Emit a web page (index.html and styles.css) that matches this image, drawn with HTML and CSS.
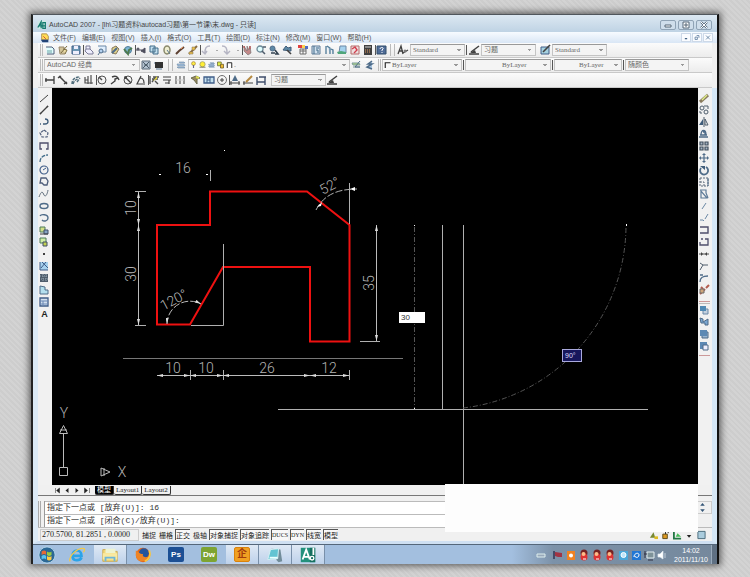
FILE: index.html
```html
<!DOCTYPE html>
<html lang="zh-CN">
<head>
    <meta charset="UTF-8">
    <meta name="viewport" content="width=device-width, initial-scale=1.0">
    <title>AutoCAD 2007</title>
    <link rel="stylesheet" href="styles.css">
</head>
<body>
    <!-- Icon sprite -->
    <svg class="sprite" aria-hidden="true">
        <symbol id="new" viewBox="0 0 12 12"><path d="M2 3h6l2 2v5H3" fill="#dff" stroke="#346" /><path d="M3 6h5v3H3z" fill="#9cc" /></symbol>
        <symbol id="open" viewBox="0 0 12 12"><path d="M2 3h5l1 7H3z" fill="#cb8" stroke="#875" /><path d="M4 9l6-7M6 5l4 1-2 4" stroke="#652" fill="#ed9" /></symbol>
        <symbol id="save" viewBox="0 0 12 12"><path d="M2 2h8v8H2z" fill="#58a" stroke="#247" /><path d="M4 2h4v3H4zM3 7h6v3H3z" fill="#eef" /></symbol>
        <symbol id="print" viewBox="0 0 12 12"><path d="M3 5V2h4v3M3 5h4l3 3v2H5L2 7z" fill="#eef" stroke="#668" /></symbol>
        <symbol id="preview" viewBox="0 0 12 12"><path d="M2 2h8v6H5" fill="#def" stroke="#579" /><circle cx="5" cy="7" r="2" fill="#ace" stroke="#357" /><path d="M4 8l-2 3" stroke="#357" /></symbol>
        <symbol id="publish" viewBox="0 0 12 12"><path d="M3 4l4-2 3 3-3 5-4-1z" fill="#dc7" stroke="#764" /><path d="M3 9l5-5" stroke="#357" stroke-width="2" /></symbol>
        <symbol id="web" viewBox="0 0 12 12"><circle cx="6" cy="6" r="3.5" fill="#6ac" stroke="#368" /><path d="M2 5l4 5 1-4 3-2" stroke="#363" stroke-width="2" fill="none" /></symbol>
        <symbol id="cut" viewBox="0 0 12 12"><path d="M1 6h6M6 7l4-3v5z" fill="#334" stroke="#334" /><circle cx="3" cy="5" r="1.5" fill="#445" /></symbol>
        <symbol id="copy" viewBox="0 0 12 12"><path d="M2 2h5v6H2zM5 4h5v6H5z" fill="#bde" stroke="#257" /></symbol>
        <symbol id="paste" viewBox="0 0 12 12"><ellipse cx="6" cy="6" rx="3" ry="4" fill="#eec" stroke="#775" stroke-width="1.5" /><path d="M6 6l3 4" stroke="#468" /></symbol>
        <symbol id="brush" viewBox="0 0 12 12"><path d="M2 10l3-3 5-4" stroke="#421" stroke-width="2" fill="none" /><path d="M7 5l2-2" stroke="#d73" /></symbol>
        <symbol id="block" viewBox="0 0 12 12"><path d="M2 10l8-8" stroke="#752" stroke-width="2" /><path d="M5 3h3v3H5zM2 8h4v2H2z" fill="#eb3" stroke="#653" stroke-width=".5" /></symbol>
        <symbol id="undo" viewBox="0 0 12 12"><path d="M10 2C6 2 5 4 5 9M2 7l3 3 2-3" stroke="#aab" fill="none" stroke-width="1.4" /></symbol>
        <symbol id="redo" viewBox="0 0 12 12"><path d="M1 2c4 0 5 2 5 7M3 7l3 3 3-3" stroke="#aab" fill="none" stroke-width="1.4" /></symbol>
        <symbol id="pan" viewBox="0 0 12 12"><path d="M2 2l3 5V2l2 4 1-4 1 7-3 2-4-4z" fill="#b77" stroke="#555" stroke-width=".6" /><path d="M8 2v3M1 3h2" stroke="#b22" /></symbol>
        <symbol id="zoomrt" viewBox="0 0 12 12"><circle cx="5" cy="5" r="3" fill="#dff" stroke="#578" stroke-width="1.3" /><path d="M7 7l3 3M8 3h3" stroke="#345" stroke-width="1.5" /></symbol>
        <symbol id="zoomwin" viewBox="0 0 12 12"><circle cx="4.500" cy="4.500" r="2.500" fill="#479" stroke="#357" /><path d="M3 9h4M7 6l3 4h-3" stroke="#123" stroke-width="1.6" fill="none" /></symbol>
        <symbol id="zoomprev" viewBox="0 0 12 12"><path d="M2 6l3-4 2 2 3-1v4z" fill="#479" stroke="#246" /><path d="M6 6l4 4" stroke="#222" stroke-width="1.6" /></symbol>
        <symbol id="props" viewBox="0 0 12 12"><path d="M1 1h4v3H1z" fill="#d22" /><path d="M5 1h3v3H5z" fill="#fc3" /><path d="M8 2h3v3H8z" fill="#35b" /><path d="M3 5h6v5H3zM3 7h6M6 5v5" fill="#fff" stroke="#555" /></symbol>
        <symbol id="design" viewBox="0 0 12 12"><path d="M2 2h8v8H2z" fill="#cde" stroke="#468" /><path d="M4 2v8M6 4h3M6 6h2v3" stroke="#257" fill="none" /></symbol>
        <symbol id="palette" viewBox="0 0 12 12"><path d="M3 2v8M4 2l3 2v6M8 5l2 1v4" stroke="#368" fill="#cde" stroke-width="1.300" /></symbol>
        <symbol id="sheet" viewBox="0 0 12 12"><path d="M4 2h6v7H3z" fill="#9ce" stroke="#579" /><path d="M1 8l4-1 5 1v2H2z" fill="#396" /></symbol>
        <symbol id="markup" viewBox="0 0 12 12"><path d="M2 2h8v8H2z" fill="#edd" stroke="#a55" /><path d="M3 5l3-2 2 3-3 3" stroke="#c23" fill="none" stroke-width="1.400" /></symbol>
        <symbol id="calc" viewBox="0 0 12 12"><path d="M2 1h8v10H2z" fill="#222" /><path d="M3 3h6" stroke="#ccc" /><path d="M3 6h6M3 8h6" stroke="#d84" stroke-dasharray="1 1" /></symbol>
        <symbol id="help" viewBox="0 0 12 12"><path d="M2 2h9v8H2z" fill="#358" stroke="#135" /><path d="M5 5c0-2 4-2 3 0L7 6v1M7 8v1" stroke="#fff" fill="none" /></symbol>
        <symbol id="textstyle" viewBox="0 0 12 12"><path d="M1 10l3-8 2 8M2 7h4M6 9l5-3" stroke="#222" fill="none" stroke-width="1.300" /><circle cx="8" cy="7" r="1.500" fill="#666" /></symbol>
        <symbol id="dimstyle" viewBox="0 0 12 12"><path d="M1 10h10M3 8l8-6" stroke="#222" fill="none" stroke-width="1.500" /><path d="M2 9l5-3 1 3z" fill="#222" /></symbol>
        <symbol id="tabstyle" viewBox="0 0 12 12"><path d="M2 3h8v7H2z" fill="#9cd" stroke="#247" /><path d="M4 8l7-7" stroke="#222" stroke-width="1.600" /></symbol>
        <symbol id="gear" viewBox="0 0 12 12"><path d="M2 2h8v8H2z" fill="#abc" stroke="#456" /><path d="M3 3l6 6M9 3L3 9M4 6h4" stroke="#345" /></symbol>
        <symbol id="monitor" viewBox="0 0 12 12"><path d="M2 3h8v6H2z" fill="#111" /><path d="M1 4h1M3 10h6" stroke="#468" /></symbol>
        <symbol id="layers" viewBox="0 0 12 12"><path d="M2 5h7l1 2H3zM2 8h7l1 1H3zM4 3h5l1 1H5z" fill="#9bd" stroke="#579" stroke-width=".6" /></symbol>
        <symbol id="bulb" viewBox="0 0 12 12"><circle cx="6" cy="4" r="2.500" fill="#fe4" stroke="#a83" /><path d="M6 6v4" stroke="#668" stroke-width="1.500" /></symbol>
        <symbol id="sun" viewBox="0 0 12 12"><circle cx="6" cy="5" r="3.500" fill="#fe3" stroke="#996" /><path d="M2 9h8" stroke="#664" /></symbol>
        <symbol id="lock" viewBox="0 0 12 12"><path d="M2 2h5v5H2z" fill="#de4" stroke="#663" /><path d="M6 5h4v5H6z" fill="#eb3" stroke="#652" /></symbol>
        <symbol id="square" viewBox="0 0 12 12"><path d="M3 10V3h6v7" fill="#fff" stroke="#222" stroke-width="1.300" /></symbol>
        <symbol id="corner" viewBox="0 0 12 12"><path d="M3 10V3h7" stroke="#222" stroke-width="1.500" fill="none" /></symbol>
        <symbol id="layprev" viewBox="0 0 12 12"><path d="M2 4h7l1 2H3zM3 8h7" fill="#ad7" stroke="#688" /><path d="M10 2L5 8h5" stroke="#357" fill="none" /></symbol>
        <symbol id="laystate" viewBox="0 0 12 12"><path d="M9 2L5 5h4l-5 3 5 2" stroke="#357" fill="#9bd" stroke-width="1.500" /></symbol>
        <symbol id="dlinear" viewBox="0 0 12 12"><path d="M1 6h9M2 4v4M10 2v8" stroke="#222" stroke-width="1.300" /></symbol>
        <symbol id="daligned" viewBox="0 0 12 12"><path d="M2 2l8 8M1 4l3-2M7 10l3-2M5 5l2 2" stroke="#222" stroke-width="1.500" /></symbol>
        <symbol id="darc" viewBox="0 0 12 12"><path d="M2 10c0-5 3-7 8-7M3 10c1-3 2-4 5-5M7 8l3-4" stroke="#356" fill="none" stroke-width="1.400" stroke-dasharray="3 1" /></symbol>
        <symbol id="dord" viewBox="0 0 12 12"><path d="M2 3v6h8M5 2v8M8 1v9M2 6h3" stroke="#333" fill="none" stroke-width="1.200" /></symbol>
        <symbol id="dradius" viewBox="0 0 12 12"><circle cx="6" cy="6" r="4" fill="none" stroke="#333" /><path d="M6 6L3 3" stroke="#333" stroke-width="1.500" /></symbol>
        <symbol id="djog" viewBox="0 0 12 12"><path d="M3 3c4-2 6 0 7 3M2 10l4-3V5l3-1" stroke="#222" fill="none" stroke-width="1.400" /></symbol>
        <symbol id="ddia" viewBox="0 0 12 12"><circle cx="6" cy="6" r="4" fill="none" stroke="#333" /><path d="M3 3l6 6M3 5V3h2" stroke="#222" stroke-width="1.400" fill="none" /></symbol>
        <symbol id="dangle" viewBox="0 0 12 12"><path d="M6 2L2 10h8M5 4c3 0 4 2 4 5" stroke="#222" fill="none" stroke-width="1.200" /></symbol>
        <symbol id="dquick" viewBox="0 0 12 12"><path d="M2 2v8M4 5h6M4 8l4-5M5 3h6M7 7l3 3" stroke="#333" stroke-width="1.400" /><path d="M5 7l4-5v3z" fill="#dc2" /></symbol>
        <symbol id="dbase" viewBox="0 0 12 12"><path d="M2 3h8M2 6h8M8 6v4M4 9h4" stroke="#222" stroke-width="1.200" /></symbol>
        <symbol id="dcont" viewBox="0 0 12 12"><path d="M2 2v8M6 2v8M10 2v8" stroke="#222" /><path d="M2 6h8" stroke="#ccc" /></symbol>
        <symbol id="dlead" viewBox="0 0 12 12"><path d="M1 4l5-2 4 2-3 1v5L4 6z" fill="#874" stroke="#553" /><path d="M6 3l3 1" stroke="#dd3" stroke-width="2" /></symbol>
        <symbol id="dtol" viewBox="0 0 12 12"><path d="M1 3h10v6H1z" fill="#bde" stroke="#247" stroke-width="1.300" /><path d="M4 3v6M7 3v6M4 6h3" stroke="#247" /></symbol>
        <symbol id="dcenter" viewBox="0 0 12 12"><circle cx="6" cy="6" r="4.500" fill="none" stroke="#555" /><path d="M4 6h4M6 4v4" stroke="#222" /></symbol>
        <symbol id="dedit" viewBox="0 0 12 12"><path d="M1 9h10M2 7v4M10 7v4" stroke="#222" /><path d="M3 7l3-6 3 6z" fill="#357" /></symbol>
        <symbol id="dtedit" viewBox="0 0 12 12"><path d="M1 9h10M2 7v4" stroke="#222" /><path d="M4 8l6-6" stroke="#a72" stroke-width="2" /></symbol>
        <symbol id="dupdate" viewBox="0 0 12 12"><path d="M2 3v8M10 3v8M2 8h8M4 3h7" stroke="#235" stroke-width="1.400" /></symbol>
        <!-- draw -->
        <symbol id="line" viewBox="0 0 12 12"><path d="M2 10l8-7" stroke="#222" /></symbol>
        <symbol id="xline" viewBox="0 0 12 12"><path d="M2 10l8-8" stroke="#222" stroke-width="1.200" /><path d="M2 9h1v1H2zM9 2h1v1H9z" fill="#222" stroke="#222" stroke-width=".5" /></symbol>
        <symbol id="pline" viewBox="0 0 12 12"><path d="M2 8h1M5 8h2c4 0 4-5 0-5" stroke="#246" fill="none" stroke-width="1.300" /></symbol>
        <symbol id="polygon" viewBox="0 0 12 12"><path d="M6 2l4 3-1 4H4L2 5z" stroke="#346" fill="none" stroke-dasharray="3 1" stroke-width="1.200" /></symbol>
        <symbol id="rect" viewBox="0 0 12 12"><path d="M4 9H2V3h8v6H8" stroke="#335" fill="none" stroke-width="1.300" /></symbol>
        <symbol id="arc" viewBox="0 0 12 12"><path d="M2 10c0-4 3-7 8-7" stroke="#257" fill="none" stroke-width="1.300" stroke-dasharray="4 1" /></symbol>
        <symbol id="circle" viewBox="0 0 12 12"><circle cx="6" cy="6" r="4" fill="none" stroke="#247" stroke-width="1.200" /><path d="M5 6l3-2" stroke="#247" /></symbol>
        <symbol id="cloud" viewBox="0 0 12 12"><path d="M3 2h5l2 3-1 4H6L4 7H2z" fill="none" stroke="#346" stroke-width="1.300" /></symbol>
        <symbol id="spline" viewBox="0 0 12 12"><path d="M1 9c3-8 4-4 5-2s3 1 4-5" fill="none" stroke="#456" /></symbol>
        <symbol id="ellipse" viewBox="0 0 12 12"><ellipse cx="6" cy="6" rx="4" ry="2.500" fill="none" stroke="#357" stroke-width="1.400" /></symbol>
        <symbol id="earc" viewBox="0 0 12 12"><path d="M2 4c1-2 8-2 8 2 0 3-4 4-6 2" fill="none" stroke="#357" stroke-width="1.400" /></symbol>
        <symbol id="insert" viewBox="0 0 12 12"><path d="M2 3h5v5H2z" fill="#cd7" stroke="#364" /><path d="M6 6h4v4H6z" fill="#79b" stroke="#235" /><path d="M2 10h8" stroke="#222" /></symbol>
        <symbol id="mkblock" viewBox="0 0 12 12"><path d="M2 2h6v5H2z" fill="#ce9" stroke="#364" /><path d="M5 6h4v4H5z" fill="#bc3" stroke="#235" /></symbol>
        <symbol id="point" viewBox="0 0 12 12"><path d="M5 5h2v2H5z" fill="#222" /></symbol>
        <symbol id="hatch" viewBox="0 0 12 12"><path d="M2 2h8v8H2z" fill="#9ce" /><path d="M2 2v8h8M4 2l6 6M8 2L3 8" stroke="#247" fill="none" /></symbol>
        <symbol id="gradient" viewBox="0 0 12 12"><path d="M2 2h8v8H2z" fill="#345" /><path d="M2 4h8M3 7h7M5 2v8M8 2v8" stroke="#89a" stroke-dasharray="1 1" /></symbol>
        <symbol id="region" viewBox="0 0 12 12"><path d="M2 2v8h8V6H7V3z" fill="#ade" stroke="#357" /></symbol>
        <symbol id="table" viewBox="0 0 12 12"><path d="M2 2h8v8H2z" fill="#cde" stroke="#247" stroke-width="1.300" /><path d="M2 5h8M2 8h8M5 5v5" stroke="#57a" /></symbol>
        <!-- modify -->
        <symbol id="erase" viewBox="0 0 12 12"><path d="M2 10l8-7" stroke="#764" stroke-width="3" /><path d="M4 8l5-5" stroke="#de7" stroke-width="1.500" /></symbol>
        <symbol id="mcopy" viewBox="0 0 12 12"><circle cx="4" cy="4" r="2" fill="none" stroke="#345" /><circle cx="8" cy="8" r="2" fill="none" stroke="#345" /><path d="M6 2h4v3M2 7v2h2" stroke="#345" fill="none" /></symbol>
        <symbol id="mirror" viewBox="0 0 12 12"><path d="M1 9l4-6v6z" fill="#246" /><path d="M6 1v10M7 9V3l3 6z" stroke="#345" fill="none" /></symbol>
        <symbol id="offset" viewBox="0 0 12 12"><path d="M1 9h9M2 7h7M3 7c0-6 5-6 5 0M5 4h2v3" stroke="#357" fill="none" stroke-width="1.300" /></symbol>
        <symbol id="array" viewBox="0 0 12 12"><path d="M2 2h3v3H2zM7 2h3v3H7zM2 7h3v3H2zM7 7h3v3H7z" fill="#9ab" stroke="#234" stroke-width="1.200" /></symbol>
        <symbol id="move" viewBox="0 0 12 12"><path d="M6 2v8M2 6h8" stroke="#357" stroke-width="1.200" /><path d="M6 1l2 2H4zM6 11l2-2H4zM1 6l2-2v4zM11 6L9 4v4z" fill="#357" /></symbol>
        <symbol id="rotate" viewBox="0 0 12 12"><path d="M3 4a4 4 0 1 0 5-1" fill="none" stroke="#357" stroke-width="1.800" /><path d="M2 2h5v4z" fill="#246" /></symbol>
        <symbol id="scale" viewBox="0 0 12 12"><path d="M2 2h8v8H2zM2 6h4v4" fill="none" stroke="#456" stroke-dasharray="2 1" /><path d="M10 2v8" stroke="#357" /></symbol>
        <symbol id="stretch" viewBox="0 0 12 12"><path d="M3 10V3l6 7zM2 2h6v3l2 5" fill="none" stroke="#468" stroke-width="1.200" /></symbol>
        <symbol id="trim" viewBox="0 0 12 12"><path d="M4 9l4-6" stroke="#579" /></symbol>
        <symbol id="extend" viewBox="0 0 12 12"><path d="M2 8h3l1 1M7 7l3-5" stroke="#579" fill="none" /></symbol>
        <symbol id="break" viewBox="0 0 12 12"><path d="M2 3h8v6H2" stroke="#335" fill="none" stroke-width="1.400" /></symbol>
        <symbol id="break2" viewBox="0 0 12 12"><path d="M2 6v3h8V3H7M3 3h2" stroke="#335" fill="none" stroke-width="1.300" /></symbol>
        <symbol id="join" viewBox="0 0 12 12"><path d="M1 6h10" stroke="#333" /><path d="M5 6L3 4v4zM7 6l2-2v4z" fill="#222" /></symbol>
        <symbol id="chamfer" viewBox="0 0 12 12"><path d="M2 10l3-5h5M2 3l3 2" stroke="#345" fill="none" /></symbol>
        <symbol id="fillet" viewBox="0 0 12 12"><path d="M2 10c0-5 3-6 8-6M2 3h3" stroke="#357" fill="none" stroke-width="1.300" /></symbol>
        <symbol id="explode" viewBox="0 0 12 12"><path d="M2 10l5-5M8 4l3-3M3 3l2 2" stroke="#a43" stroke-width="2" /><path d="M2 5h4v4H2z" fill="#c96" stroke="#555" /></symbol>
        <symbol id="front" viewBox="0 0 12 12"><path d="M5 5h5v5H5z" fill="#bcd" stroke="#579" /><path d="M2 2h6v5H2z" fill="#37a" /></symbol>
        <symbol id="back" viewBox="0 0 12 12"><path d="M2 2l3 1v3l5-3v6H7V7H3z" fill="#69c" stroke="#357" /></symbol>
        <symbol id="above" viewBox="0 0 12 12"><path d="M4 4h6v6H4z" fill="#8ac" stroke="#357" /><path d="M2 2h7v6H2z" fill="#47a" /></symbol>
        <symbol id="under" viewBox="0 0 12 12"><path d="M2 2h7v7H2z" fill="#47a" /><path d="M5 5h5v5H5z" fill="#eef" stroke="#357" /></symbol>
        <symbol id="qq" viewBox="0 0 12 12"><circle cx="6" cy="4" r="3.500" fill="#722" /><circle cx="6" cy="8" r="3.500" fill="#d33" /><circle cx="5.500" cy="5" r="2" fill="#fb8" /><path d="M5 10h3" stroke="#fff" /></symbol>
    </svg>

    <div class="window">
        <header class="titlebar">
            <svg class="icon" viewBox="0 0 12 12"><path d="M1 1h10v10H1z" fill="#cde9e4" /><path d="M1 9l4-7v8M7 3h3v7H7zM2 7h8" stroke="#157a70" stroke-width="1.500" fill="none" /></svg>
            <h1>AutoCAD 2007 - [lh\习题资料\autocad习题\第一节课\末.dwg - 只读]</h1>
            <div class="window-buttons">
                <button type="button" aria-label="最小化"><svg viewBox="0 0 12 8"><path d="M3 4h6v2H3z" fill="#fff" stroke="#567" /></svg></button>
                <button type="button" aria-label="最大化"><svg viewBox="0 0 12 8"><path d="M3 1h6v6H3zM5 3h2v2H5z" fill="#fff" stroke="#567" /></svg></button>
                <button type="button" aria-label="关闭"><svg viewBox="0 0 12 8"><path d="M3 1l6 6M9 1L3 7" stroke="#567" stroke-width="2" /><path d="M3 1l6 6M9 1L3 7" stroke="#fff" /></svg></button>
            </div>
        </header>

        <nav class="menubar">
            <svg class="icon" viewBox="0 0 12 12"><path d="M2 1h6l2 3v4H2z" fill="#fd5" stroke="#a84" /><path d="M1 8h9v3H3z" fill="#247" /><path d="M4 4l3 3" stroke="#c33" /></svg>
            <button type="button">文件(F)</button>
            <button type="button">编辑(E)</button>
            <button type="button">视图(V)</button>
            <button type="button">插入(I)</button>
            <button type="button">格式(O)</button>
            <button type="button">工具(T)</button>
            <button type="button">绘图(D)</button>
            <button type="button">标注(N)</button>
            <button type="button">修改(M)</button>
            <button type="button">窗口(W)</button>
            <button type="button">帮助(H)</button>
            <div class="doc-buttons">
                <button type="button" aria-label="最小化文档"><svg viewBox="0 0 9 9"><path d="M3 6h3" stroke="#357" stroke-width="1.500" /></svg></button>
                <button type="button" aria-label="还原文档"><svg viewBox="0 0 9 9"><path d="M2 4h3v3H2zM4 2h3v3" stroke="#579" fill="none" /></svg></button>
                <button type="button" aria-label="关闭文档"><svg viewBox="0 0 9 9"><path d="M2 2l5 5M7 2L2 7" stroke="#579" /></svg></button>
            </div>
        </nav>

        <div class="toolbar">
            <span class="grip"></span>
            <button type="button" class="tool" aria-label="新建"><svg><use href="#new" /></svg></button>
            <button type="button" class="tool" aria-label="打开"><svg><use href="#open" /></svg></button>
            <button type="button" class="tool" aria-label="保存"><svg><use href="#save" /></svg></button>
            <span class="sep"></span>
            <button type="button" class="tool" aria-label="打印"><svg><use href="#print" /></svg></button>
            <button type="button" class="tool" aria-label="打印预览"><svg><use href="#preview" /></svg></button>
            <button type="button" class="tool" aria-label="发布"><svg><use href="#publish" /></svg></button>
            <button type="button" class="tool" aria-label="三维 DWF"><svg><use href="#web" /></svg></button>
            <span class="sep"></span>
            <button type="button" class="tool" aria-label="剪切"><svg><use href="#cut" /></svg></button>
            <button type="button" class="tool" aria-label="复制"><svg><use href="#copy" /></svg></button>
            <button type="button" class="tool" aria-label="粘贴"><svg><use href="#paste" /></svg></button>
            <button type="button" class="tool" aria-label="特性匹配"><svg><use href="#brush" /></svg></button>
            <button type="button" class="tool" aria-label="块编辑器"><svg><use href="#block" /></svg></button>
            <span class="sep"></span>
            <button type="button" class="tool" aria-label="放弃"><svg><use href="#undo" /></svg></button>
            <span class="drop"></span>
            <button type="button" class="tool" aria-label="重做"><svg><use href="#redo" /></svg></button>
            <span class="drop"></span>
            <span class="sep"></span>
            <button type="button" class="tool" aria-label="实时平移"><svg><use href="#pan" /></svg></button>
            <button type="button" class="tool" aria-label="实时缩放"><svg><use href="#zoomrt" /></svg></button>
            <button type="button" class="tool" aria-label="窗口缩放"><svg><use href="#zoomwin" /></svg></button>
            <button type="button" class="tool" aria-label="缩放上一个"><svg><use href="#zoomprev" /></svg></button>
            <button type="button" class="tool push" aria-label="特性"><svg><use href="#props" /></svg></button>
            <button type="button" class="tool" aria-label="设计中心"><svg><use href="#design" /></svg></button>
            <button type="button" class="tool" aria-label="工具选项板"><svg><use href="#palette" /></svg></button>
            <button type="button" class="tool" aria-label="图纸集"><svg><use href="#sheet" /></svg></button>
            <button type="button" class="tool" aria-label="标记集"><svg><use href="#markup" /></svg></button>
            <button type="button" class="tool" aria-label="快速计算器"><svg><use href="#calc" /></svg></button>
            <span class="sep"></span>
            <button type="button" class="tool" aria-label="帮助"><svg><use href="#help" /></svg></button>
            <span class="grip wide"></span>
            <button type="button" class="tool" aria-label="文字样式"><svg><use href="#textstyle" /></svg></button>
            <select class="combo w56 mono" aria-label="文字样式列表"><option>Standard</option></select>
            <span class="sep dark"></span>
            <button type="button" class="tool" aria-label="标注样式"><svg><use href="#dimstyle" /></svg></button>
            <select class="combo w56" aria-label="标注样式列表"><option>习题</option></select>
            <button type="button" class="tool push" aria-label="表格样式"><svg><use href="#tabstyle" /></svg></button>
            <select class="combo w56 mono" aria-label="表格样式列表"><option>Standard</option></select>
        </div>

        <div class="toolbar">
            <span class="grip"></span>
            <select class="combo w96" aria-label="工作空间"><option>AutoCAD 经典</option></select>
            <button type="button" class="tool" aria-label="工作空间设置"><svg><use href="#gear" /></svg></button>
            <button type="button" class="tool" aria-label="我的工作空间"><svg><use href="#monitor" /></svg></button>
            <span class="grip wide"></span>
            <button type="button" class="tool" aria-label="图层特性"><svg><use href="#layers" /></svg></button>
            <div class="layer-combo">
                <svg><use href="#bulb" /></svg>
                <svg><use href="#sun" /></svg>
                <svg><use href="#layers" /></svg>
                <svg><use href="#lock" /></svg>
                <svg><use href="#square" /></svg>
                <select class="combo" aria-label="图层"><option>.</option></select>
            </div>
            <button type="button" class="tool" aria-label="置为当前"><svg><use href="#layprev" /></svg></button>
            <button type="button" class="tool" aria-label="上一个图层"><svg><use href="#laystate" /></svg></button>
            <span class="grip"></span>
            <div class="layer-combo w80">
                <svg><use href="#corner" /></svg>
                <select class="combo mono" aria-label="颜色"><option>ByLayer</option></select>
            </div>
            <span class="sep dark"></span>
            <select class="combo w86 mono indent-l" aria-label="线型"><option>ByLayer</option></select>
            <span class="sep dark"></span>
            <select class="combo w68 mono indent" aria-label="线宽"><option>ByLayer</option></select>
            <span class="sep dark"></span>
            <select class="combo w64" aria-label="打印样式"><option>随颜色</option></select>
        </div>

        <div class="toolbar">
            <span class="grip"></span>
            <button type="button" class="tool" aria-label="线性"><svg><use href="#dlinear" /></svg></button>
            <button type="button" class="tool" aria-label="对齐"><svg><use href="#daligned" /></svg></button>
            <button type="button" class="tool" aria-label="弧长"><svg><use href="#darc" /></svg></button>
            <button type="button" class="tool" aria-label="坐标"><svg><use href="#dord" /></svg></button>
            <span class="sep"></span>
            <button type="button" class="tool" aria-label="半径"><svg><use href="#dradius" /></svg></button>
            <button type="button" class="tool" aria-label="折弯"><svg><use href="#djog" /></svg></button>
            <button type="button" class="tool" aria-label="直径"><svg><use href="#ddia" /></svg></button>
            <button type="button" class="tool" aria-label="角度"><svg><use href="#dangle" /></svg></button>
            <span class="sep"></span>
            <button type="button" class="tool" aria-label="快速标注"><svg><use href="#dquick" /></svg></button>
            <button type="button" class="tool" aria-label="基线"><svg><use href="#dbase" /></svg></button>
            <button type="button" class="tool" aria-label="连续"><svg><use href="#dcont" /></svg></button>
            <button type="button" class="tool push" aria-label="快速引线"><svg><use href="#dlead" /></svg></button>
            <button type="button" class="tool" aria-label="公差"><svg><use href="#dtol" /></svg></button>
            <button type="button" class="tool" aria-label="圆心标记"><svg><use href="#dcenter" /></svg></button>
            <span class="sep"></span>
            <button type="button" class="tool" aria-label="编辑标注"><svg><use href="#dedit" /></svg></button>
            <button type="button" class="tool" aria-label="编辑标注文字"><svg><use href="#dtedit" /></svg></button>
            <button type="button" class="tool" aria-label="标注更新"><svg><use href="#dupdate" /></svg></button>
            <select class="combo w56 push" aria-label="标注样式控制"><option>习题</option></select>
            <button type="button" class="tool" aria-label="标注样式管理"><svg><use href="#dimstyle" /></svg></button>
        </div>

        <div class="workspace">
            <div class="side">
                <button type="button" class="tool" aria-label="直线"><svg><use href="#line" /></svg></button>
                <button type="button" class="tool" aria-label="构造线"><svg><use href="#xline" /></svg></button>
                <button type="button" class="tool" aria-label="多段线"><svg><use href="#pline" /></svg></button>
                <button type="button" class="tool" aria-label="正多边形"><svg><use href="#polygon" /></svg></button>
                <button type="button" class="tool" aria-label="矩形"><svg><use href="#rect" /></svg></button>
                <button type="button" class="tool" aria-label="圆弧"><svg><use href="#arc" /></svg></button>
                <button type="button" class="tool" aria-label="圆"><svg><use href="#circle" /></svg></button>
                <button type="button" class="tool" aria-label="修订云线"><svg><use href="#cloud" /></svg></button>
                <button type="button" class="tool" aria-label="样条曲线"><svg><use href="#spline" /></svg></button>
                <button type="button" class="tool" aria-label="椭圆"><svg><use href="#ellipse" /></svg></button>
                <button type="button" class="tool" aria-label="椭圆弧"><svg><use href="#earc" /></svg></button>
                <button type="button" class="tool" aria-label="插入块"><svg><use href="#insert" /></svg></button>
                <button type="button" class="tool" aria-label="创建块"><svg><use href="#mkblock" /></svg></button>
                <button type="button" class="tool" aria-label="点"><svg><use href="#point" /></svg></button>
                <button type="button" class="tool" aria-label="图案填充"><svg><use href="#hatch" /></svg></button>
                <button type="button" class="tool" aria-label="渐变色"><svg><use href="#gradient" /></svg></button>
                <button type="button" class="tool" aria-label="面域"><svg><use href="#region" /></svg></button>
                <button type="button" class="tool" aria-label="表格"><svg><use href="#table" /></svg></button>
                <button type="button" class="tool letter">A</button>
            </div>

            <main class="canvas">
                <svg class="drawing" viewBox="52 88 646 397" preserveAspectRatio="xMinYMin meet">
                    <defs>
                        <marker id="arrow" markerUnits="userSpaceOnUse" markerWidth="6" markerHeight="3" refX="6" refY="1.5" orient="auto-start-reverse"><path d="M0 0l6 1.500-6 1.500z" fill="#ddd" /></marker>
                    </defs>
                    <!-- part outline -->
                    <path class="part" d="M157 225H210V191.500H307L349.500 225V341.500H310V267H223L190 324.500H157Z" />
                    <g class="white">
                        <path d="M223.500 244V325.500H191M349.500 183V224M210.500 170v11" />
                        <path d="M135 191.500h11M135 325.500h11M360 341.500h20M190.500 370v10M223.500 370v10M349.500 370v10" />
                        <path d="M278 409.500H648M442.500 225V409M463.500 225V485" />
                    </g>
                    <path class="faint" d="M123 358.500H403" />
                    <!-- dimensions -->
                    <g class="dim">
                        <path d="M138.500 192V225" /><path d="M138.500 225V325" />
                        <path d="M376.500 225V341" />
                        <path d="M157 375.500H190" /><path d="M190 375.500H223" /><path d="M223 375.500H310" /><path d="M310 375.500H349" />
                        <path d="M167 324A23 23 0 0 1 201 304" stroke-dasharray="7 2" />
                    </g>
                    <path class="white" d="M316 210C323 196 336 189 357 189" stroke-dasharray="7 2" />
                    <path d="M317 207l5-5-1 4zM350 189l5-2v4zM159 174h2v1h-2zM206 174h2v1h-2zM224 150h1v1h-1zM414 225h1v1h-1zM626 224h1v2h-1zM414 408h1v1h-1z" fill="#fff" />
                    <g class="dim-text">
                        <text x="183" y="173">16</text>
                        <text x="173" y="373">10</text>
                        <text x="206" y="373">10</text>
                        <text x="267" y="373">26</text>
                        <text x="329" y="373">12</text>
                        <text transform="translate(136 208) rotate(-90)">10</text>
                        <text transform="translate(136 274) rotate(-90)">30</text>
                        <text transform="translate(374 283) rotate(-90)">35</text>
                        <text transform="translate(332 190) rotate(-28)">52°</text>
                        <text transform="translate(176 304) rotate(-28)">120°</text>
                    </g>
                    <!-- rubber band -->
                    <path class="track" d="M414.500 227V408" />
                    <path class="track" d="M463 408A184 184 0 0 0 626 226" />
                    <path d="M467 484.500H630" stroke="#2b6b4c" />
                    <!-- UCS icon -->
                    <path class="ucs" d="M59.500 467.500h8v8h-8zM63.500 467V433M59.500 433.500h8l-4-8zM60 430h7M101 468v8l9-4zM104 468v8" />
                    <g class="dim-text">
                        <text x="64" y="418">Y</text>
                        <text x="122" y="477">X</text>
                    </g>
                </svg>
                <input class="dyn-input" type="text" value="30" aria-label="长度">
                <output class="dyn-angle">90°</output>
            </main>

            <div class="side">
                <button type="button" class="tool" aria-label="删除"><svg><use href="#erase" /></svg></button>
                <button type="button" class="tool" aria-label="复制对象"><svg><use href="#mcopy" /></svg></button>
                <button type="button" class="tool" aria-label="镜像"><svg><use href="#mirror" /></svg></button>
                <button type="button" class="tool" aria-label="偏移"><svg><use href="#offset" /></svg></button>
                <button type="button" class="tool" aria-label="阵列"><svg><use href="#array" /></svg></button>
                <button type="button" class="tool" aria-label="移动"><svg><use href="#move" /></svg></button>
                <button type="button" class="tool" aria-label="旋转"><svg><use href="#rotate" /></svg></button>
                <button type="button" class="tool" aria-label="缩放"><svg><use href="#scale" /></svg></button>
                <button type="button" class="tool" aria-label="拉伸"><svg><use href="#stretch" /></svg></button>
                <button type="button" class="tool" aria-label="修剪"><svg><use href="#trim" /></svg></button>
                <button type="button" class="tool" aria-label="延伸"><svg><use href="#extend" /></svg></button>
                <button type="button" class="tool" aria-label="打断于点"><svg><use href="#break" /></svg></button>
                <button type="button" class="tool" aria-label="打断"><svg><use href="#break2" /></svg></button>
                <button type="button" class="tool" aria-label="合并"><svg><use href="#join" /></svg></button>
                <button type="button" class="tool" aria-label="倒角"><svg><use href="#chamfer" /></svg></button>
                <button type="button" class="tool" aria-label="圆角"><svg><use href="#fillet" /></svg></button>
                <button type="button" class="tool" aria-label="分解"><svg><use href="#explode" /></svg></button>
                <span class="side-grip"></span>
                <button type="button" class="tool" aria-label="前置"><svg><use href="#front" /></svg></button>
                <button type="button" class="tool" aria-label="后置"><svg><use href="#back" /></svg></button>
                <button type="button" class="tool" aria-label="置于对象之上"><svg><use href="#above" /></svg></button>
                <button type="button" class="tool" aria-label="置于对象之下"><svg><use href="#under" /></svg></button>
                <span class="side-end"></span>
            </div>
        </div>

        <footer class="bottom">
            <div class="tabs">
                <button type="button" aria-label="第一个"><svg viewBox="0 0 9 9"><path d="M3 2v5M7 2L4 4.500 7 7z" fill="#222" stroke="#222" stroke-width=".5" /></svg></button>
                <button type="button" aria-label="上一个"><svg viewBox="0 0 9 9"><path d="M6 2L3 4.500 6 7z" fill="#222" /></svg></button>
                <button type="button" aria-label="下一个"><svg viewBox="0 0 9 9"><path d="M3 2l3 2.500L3 7z" fill="#222" /></svg></button>
                <button type="button" aria-label="最后一个"><svg viewBox="0 0 9 9"><path d="M7 2v5M2 2l3 2.500L2 7z" fill="#222" stroke="#222" stroke-width=".5" /></svg></button>
                <button type="button" class="tab current">模型</button>
                <button type="button" class="tab">Layout1</button>
                <button type="button" class="tab">Layout2</button>
            </div>
            <div class="command">
                <div class="command-lines">
                    <p>指定下一点或 [放弃(U)]: 16</p>
                    <p>指定下一点或 [闭合(C)/放弃(U)]:</p>
                </div>
                <div class="scroll">
                    <svg viewBox="0 0 9 12"><path d="M2 4l2.500-3L7 4zM2 8l2.500 3L7 8z" fill="#357" /></svg>
                </div>
            </div>
            <div class="status">
                <span class="coords">270.5700, 81.2851 , 0.0000</span>
                <button type="button">捕捉</button>
                <button type="button">栅格</button>
                <button type="button" class="on">正交</button>
                <button type="button">极轴</button>
                <button type="button" class="on">对象捕捉</button>
                <button type="button" class="on">对象追踪</button>
                <button type="button" class="on latin">DUCS</button>
                <button type="button" class="on latin">DYN</button>
                <button type="button" class="on">线宽</button>
                <button type="button" class="on">模型</button>
                <div class="status-icons">
                    <svg viewBox="0 0 10 10"><path d="M1 8l4-6 2 6z" fill="#783" /><path d="M6 8h4" stroke="#db2" stroke-width="3" /></svg>
                    <svg viewBox="0 0 10 10"><path d="M2 4h5v5H2z" fill="#d92" stroke="#541" /><path d="M5 4V1h3v2" stroke="#222" fill="none" /></svg>
                    <svg viewBox="0 0 10 10"><path d="M1 1v8h8" stroke="#274" stroke-width="2" fill="none" /><path d="M3 7l2-4 4 4z" fill="#4b5" /></svg>
                    <svg viewBox="0 0 10 10"><path d="M2 5h5L4.500 8z" fill="#222" /></svg>
                    <svg viewBox="0 0 10 10"><path d="M1 1h8v8H1z" fill="#acd" stroke="#467" /></svg>
                </div>
            </div>
            <div class="blank-panel"></div>
        </footer>

        <div class="taskbar">
            <button type="button" class="task start" aria-label="开始"><svg viewBox="0 0 20 20"><circle cx="10" cy="10" r="9" fill="#2b6795" stroke="#b9d8ea" /><path d="M4 6q3-2 5 0v4q-2-2-5 0z" fill="#e66a35" /><path d="M10 6q3 2 5 0v4q-3 2-5 0z" fill="#9c4" /><path d="M4 11q3-2 5 0v4q-2-2-5 0z" fill="#58c5f0" /><path d="M10 11q3 2 5 0v4q-3 2-5 0z" fill="#fc4" /></svg></button>
            <button type="button" class="task" aria-label="Internet Explorer"><svg viewBox="0 0 20 20"><path d="M5 11h10c0-8-10-8-10 0 0 6 8 6 10 2" fill="none" stroke="#2ba3e8" stroke-width="3" /><path d="M2 17C1 10 12 1 18 3c1 1 0 3-1 4" fill="none" stroke="#f1c84b" stroke-width="1.500" /></svg></button>
            <button type="button" class="task lit" aria-label="资源管理器"><svg viewBox="0 0 20 20"><path d="M2 4h6l1 2h9v11H2z" fill="#f3d878" stroke="#c9a850" /><path d="M5 3h11v5H5z" fill="#eef3d0" /><path d="M2 8h16v7H2z" fill="#f9e9a0" /><path d="M5 17v-4h10v4" stroke="#6db6d8" stroke-width="2" fill="none" /></svg></button>
            <button type="button" class="task" aria-label="Firefox"><svg viewBox="0 0 20 20"><circle cx="10" cy="10" r="8" fill="#e2661b" /><circle cx="11" cy="8" r="5.500" fill="#24559c" /><path d="M2 5c3 1 4 4 8 4-1 3 1 4 6 3-2 7-13 7-14-2z" fill="#ef8425" /><path d="M17 5c2 5 0 10-5 12" stroke="#fbc63b" stroke-width="2" fill="none" /></svg></button>
            <button type="button" class="task"><span class="badge ps">Ps</span></button>
            <button type="button" class="task"><span class="badge dw">Dw</span></button>
            <button type="button" class="task lit"><span class="badge qi">企</span></button>
            <button type="button" class="task lit" aria-label="记事本"><svg viewBox="0 0 20 20"><path d="M6 3l10 1 2 13-4 1-2-2z" fill="#718c99" /><path d="M5 4l9-1-1 11-11 1z" fill="#63c4d2" stroke="#d8f3f5" /><path d="M4 13h9" stroke="#eaffff" stroke-width="2" /></svg></button>
            <button type="button" class="task lit" aria-label="AutoCAD"><svg viewBox="0 0 20 20"><path d="M2 2h16v16H2z" fill="#23917c" /><path d="M12 2h6v16h-6z" fill="#167060" /><path d="M4 15L8 4l4 11M5 12h6M16 2v8" stroke="#fff" stroke-width="2" fill="none" /><circle cx="14.500" cy="13.500" r="2" fill="none" stroke="#fff" stroke-width="1.500" /></svg></button>
            <div class="tray">
                <svg class="keyboard" viewBox="0 0 12 12"><path d="M2 5h8v3H2z" fill="#9ab" stroke="#dee" /></svg>
                <svg viewBox="0 0 12 12"><path d="M2 2v8" stroke="#335" stroke-width="1.500" /><path d="M3 3l7 1v4H6L3 7z" fill="#a23344" /></svg>
                <svg viewBox="0 0 12 12"><path d="M2 2h8v9H2z" fill="#f08223" /><circle cx="6" cy="6.500" r="2" fill="#fff" /></svg>
                <svg><use href="#qq" /></svg>
                <svg><use href="#qq" /></svg>
                <svg><use href="#qq" /></svg>
                <svg viewBox="0 0 12 12"><path d="M2 2h9v9H2z" fill="#4ba7d8" /><circle cx="6.500" cy="6" r="2.500" fill="#bce5fa" stroke="#fff" /></svg>
                <svg viewBox="0 0 12 12"><path d="M2 2h9v9H2z" fill="#2277d4" /><path d="M4 8c0-4 5-5 5-2s-4 3-4 1" stroke="#fff" fill="none" /></svg>
                <svg viewBox="0 0 12 12"><path d="M4 3h7v6H4z" fill="#7e9299" stroke="#e3edf0" /><path d="M2 2v7M1 5h3M5 11h5" stroke="#334" /></svg>
                <svg viewBox="0 0 12 12"><path d="M2 5h2l3-3v8L4 8H2zM9 4v5" fill="#fff" stroke="#dee8ef" stroke-width=".7" /></svg>
                <time class="clock"><span>14:02</span><span>2011/11/10</span></time>
                <button type="button" class="show-desktop" aria-label="显示桌面"></button>
            </div>
        </div>
    </div>
</body>
</html>
```

FILE: styles.css
```css
* {
    box-sizing: border-box;
}
body {
    margin: 0;
    padding: 14px 31px;
    min-height: 100vh;
    display: flex;
    font-family: "Liberation Sans", "Noto Sans CJK SC", sans-serif;
    font-size: 7px;
    color: #555;
    background: repeating-linear-gradient(45deg, #cdcdcd 0, #cdcdcd 2px, #d3d3d3 2px, #d3d3d3 4px);
}
.sprite {
    display: none;
}
svg {
    display: block;
}
button, input, select {
    font: inherit;
    color: inherit;
    margin: 0;
    padding: 0;
    border: none;
    border-radius: 0;
    background: none;
}
.window {
    flex: 1;
    min-width: 0;
    display: flex;
    flex-direction: column;
    background-color: #f0f0f0;
    border-top: 1px solid #50565c;
    border-left: 2px solid #222;
    border-right: 2px solid #111;
    box-shadow: 0 0 7px 2px rgba(0, 0, 0, 0.55);
}

/* title and menu */
.titlebar {
    height: 17px;
    display: flex;
    align-items: center;
    gap: 2px;
    padding: 3px 5px 0 4px;
    background: linear-gradient(#dce8f2, #bfd3e4);
}
.icon {
    width: 10px;
    height: 10px;
}
.titlebar h1 {
    margin: 0;
    font-size: 7px;
    line-height: 12px;
    font-weight: normal;
    white-space: nowrap;
    color: #444;
}
.window-buttons {
    display: flex;
    gap: 2px;
    margin-left: auto;
}
.window-buttons button {
    width: 16px;
    height: 10px;
    border: 1px solid #8fa3b5;
    border-radius: 2px;
    background-color: #cfdeeb;
}
.window-buttons svg {
    width: 12px;
    height: 8px;
    margin: 0 auto;
}
.menubar {
    height: 11px;
    display: flex;
    align-items: center;
    gap: 6px;
    padding: 0 4px 0 7px;
    background: linear-gradient(#f7fbff, #d9e6f5);
    line-height: 10px;
}
.menubar > button {
    white-space: nowrap;
}
.menubar .icon {
    margin-right: -3px;
}
.doc-buttons {
    display: flex;
    gap: 1px;
    margin-left: auto;
}
.doc-buttons button {
    width: 10px;
    height: 9px;
    background-color: #fafcff;
    border: 1px solid #cdd9e8;
}
.doc-buttons svg {
    width: 8px;
    height: 7px;
}

/* toolbars */
.toolbar {
    height: 15px;
    display: flex;
    align-items: center;
    margin: 0 5px;
    border-bottom: 1px solid #c9c9c9;
    background: linear-gradient(#fbfbfb, #ececec);
}
.grip {
    flex: none;
    width: 3px;
    height: 12px;
    margin: 0 1px 0 2px;
    border-left: 1px solid #bbb;
    border-right: 1px solid #bbb;
}
.grip.wide {
    width: 5px;
    margin: 0 2px;
}
.tool {
    flex: none;
    width: 13px;
    height: 13px;
}
.tool svg {
    width: 12px;
    height: 12px;
    fill: none;
    opacity: 0.85;
}
.push {
    margin-left: 3px;
}
.sep {
    flex: none;
    width: 1px;
    height: 10px;
    margin-right: -1px;
    background-color: #555;
}
.sep.dark {
    margin: 0 1px;
}
.drop {
    flex: none;
    width: 2px;
    height: 1px;
    margin: 0 3px;
    background-color: #aaa;
}
.combo {
    flex: none;
    appearance: none;
    height: 12px;
    padding: 0 10px 0 2px;
    border: 1px solid #c4c4c4;
    border-top-color: #999;
    font-size: 7px;
    line-height: 10px;
    color: #666;
    background:
        linear-gradient(45deg, transparent 50%, #999 50%) right 5px center / 2px 2px no-repeat,
        linear-gradient(-45deg, transparent 50%, #999 50%) right 3px center / 2px 2px no-repeat,
        #f4f4f4;
}
.mono {
    font-family: "Liberation Serif", serif;
}
.w56 {
    width: 55px;
}
.w64 {
    width: 64px;
}
.w68 {
    width: 68px;
}
.w80 {
    width: 80px;
}
.w86 {
    width: 86px;
}
.w96 {
    width: 96px;
}
.indent {
    padding-left: 24px;
}
.indent-l {
    padding-left: 36px;
}
.layer-combo {
    flex: none;
    width: 162px;
    height: 12px;
    display: flex;
    align-items: center;
    border: 1px solid #c4c4c4;
    border-top-color: #999;
    background-color: #f8f8f8;
}
.layer-combo.w80 {
    width: 80px;
}
.layer-combo svg {
    flex: none;
    width: 9px;
    height: 10px;
}
.layer-combo .combo {
    flex: 1;
    min-width: 0;
    height: 10px;
    padding-left: 0;
    border: none;
}
.combo.push {
    margin-left: 3px;
}

/* drawing area */
.workspace {
    flex: 1;
    display: flex;
    min-height: 0;
    border-left: 5px solid #dceaf6;
    border-right: 5px solid #d5e7f6;
    background-color: #f1f1f1;
}
.side {
    flex: none;
    width: 14px;
    padding-top: 4px;
}
.side .tool {
    display: block;
    height: 12px;
}
.side svg {
    width: 12px;
    height: 12px;
}
.side .letter {
    font-size: 9px;
    line-height: 12px;
    font-weight: bold;
    color: #222;
}
.side-grip, .side-end {
    display: block;
    width: 11px;
    margin: 5px 1px 0;
    height: 3px;
    border-top: 1px solid #cc9999;
    border-bottom: 1px solid #bbb;
}
.side-end {
    margin-top: 3px;
    height: 1px;
    border-bottom: none;
}
.canvas {
    flex: 1;
    min-width: 0;
    position: relative;
    background-color: #000;
    overflow: hidden;
}
.drawing {
    width: 100%;
    height: 100%;
    fill: none;
}
.part {
    stroke: #ee1111;
    stroke-width: 2;
}
.white {
    stroke: #b0b0b0;
    stroke-width: 1;
}
.faint {
    stroke: #777;
}
.dim path {
    stroke: #bbb;
    marker-start: url(#arrow);
    marker-end: url(#arrow);
}
.dim-text {
    font-family: Roboto, sans-serif;
    font-size: 14px;
    font-weight: 300;
    fill: #b4b4b4;
    text-anchor: middle;
}
.track {
    stroke: #555;
    stroke-dasharray: 5 2 1 2;
}
.ucs {
    stroke: #bbb;
}
.dyn-input {
    position: absolute;
    left: 347px;
    top: 224px;
    width: 26px;
    height: 11px;
    padding-left: 2px;
    background-color: #fff;
    font-size: 8px;
    line-height: 11px;
    color: #333;
}
.dyn-angle {
    position: absolute;
    left: 510px;
    top: 261px;
    width: 20px;
    height: 13px;
    padding-left: 2px;
    border: 1px solid #a9a9dc;
    background-color: #17175c;
    font-size: 7px;
    line-height: 11px;
    color: #ddf;
}

/* tabs, command line and status */
.bottom {
    position: relative;
    border-left: 5px solid #dceaf6;
    border-right: 5px solid #d5e7f6;
    border-bottom: 3px solid #cfe0f2;
}
.tabs {
    height: 11px;
    display: flex;
    align-items: center;
    padding-left: 14px;
    border-bottom: 1px solid #777;
}
.tabs svg {
    width: 10px;
    height: 9px;
}
.tab {
    height: 9px;
    padding: 0 2px;
    font-family: "Liberation Serif", "Noto Sans CJK SC", serif;
    font-size: 7px;
    line-height: 8px;
    color: #222;
    border-right: 1px solid #333;
    border-bottom: 1px solid #333;
    border-radius: 0 0 2px 2px;
}
.tab.current {
    margin-left: 3px;
    background-color: #000;
    color: #fff;
}
.command {
    display: flex;
    margin-top: 5px;
    border-left: 3px double #aaa;
}
.command-lines {
    flex: 1;
    margin-left: 3px;
    border-left: 1px solid #999;
    background-color: #fff;
}
.command p {
    margin: 0;
    height: 13px;
    padding-left: 2px;
    border-top: 1px solid #bbb;
    font-family: "Liberation Mono", "Noto Sans CJK SC", monospace;
    font-size: 8px;
    line-height: 12px;
    white-space: pre;
    color: #333;
}
.scroll {
    width: 15px;
    height: 13px;
    border: 1px solid #ccc;
}
.scroll svg {
    width: 9px;
    height: 11px;
}
.status {
    height: 14px;
    display: flex;
    align-items: center;
    gap: 2px;
    padding-left: 2px;
    border-top: 1px solid #bbb;
    color: #222;
}
.coords {
    width: 99px;
    height: 12px;
    padding-left: 1px;
    border: 1px solid #ccc;
    font-family: "Liberation Serif", serif;
    font-size: 8px;
    line-height: 10px;
    white-space: nowrap;
}
.status button {
    height: 11px;
    border-left: 1px solid transparent;
    border-top: 1px solid transparent;
    line-height: 9px;
    white-space: nowrap;
}
.status .on {
    border-color: #555;
    background-color: #f8f8f8;
}
.status .latin {
    font-family: "Liberation Serif", serif;
    font-size: 6px;
}
.status-icons {
    display: flex;
    gap: 3px;
    margin: 0 6px 0 auto;
}
.status-icons svg {
    width: 9px;
    height: 10px;
}
.blank-panel {
    position: absolute;
    top: -1px;
    right: 14px;
    width: 253px;
    height: 48px;
    background-color: #fdfdfd;
}

/* taskbar */
.taskbar {
    height: 20px;
    display: flex;
    border-top: 1px solid #55677a;
    background: linear-gradient(90deg, #a3bfdf 70%, #7c92a9 76%, #75889c);
}
.task {
    width: 33px;
    display: flex;
    align-items: center;
    justify-content: center;
    border-right: 1px solid transparent;
}
.task.start {
    width: 28px;
}
.task.lit {
    border-right-color: #7990aa;
    background: linear-gradient(#dfe9f5, #bdd1ea);
}
.task svg {
    width: 18px;
    height: 18px;
}
.badge {
    width: 16px;
    height: 15px;
    border-radius: 2px;
    font-size: 8px;
    line-height: 15px;
    font-weight: bold;
    color: #fff;
}
.ps {
    background-color: #1c4f94;
}
.dw {
    background-color: #7ea432;
}
.qi {
    background-color: #f0a022;
    border: 1px solid #d9820c;
    font-size: 10px;
    line-height: 12px;
    color: #a33b0b;
}
.tray {
    display: flex;
    align-items: center;
    gap: 1px;
    margin-left: auto;
}
.tray svg {
    width: 12px;
    height: 12px;
}
.tray .keyboard {
    margin-right: 4px;
}
.clock {
    width: 38px;
    margin-left: 3px;
    display: flex;
    flex-direction: column;
    align-items: center;
    font-size: 7px;
    line-height: 9px;
    color: #fff;
}
.show-desktop {
    width: 6px;
    height: 19px;
    border-left: 1px solid #9ab;
    background-color: #5f7083;
}
```
